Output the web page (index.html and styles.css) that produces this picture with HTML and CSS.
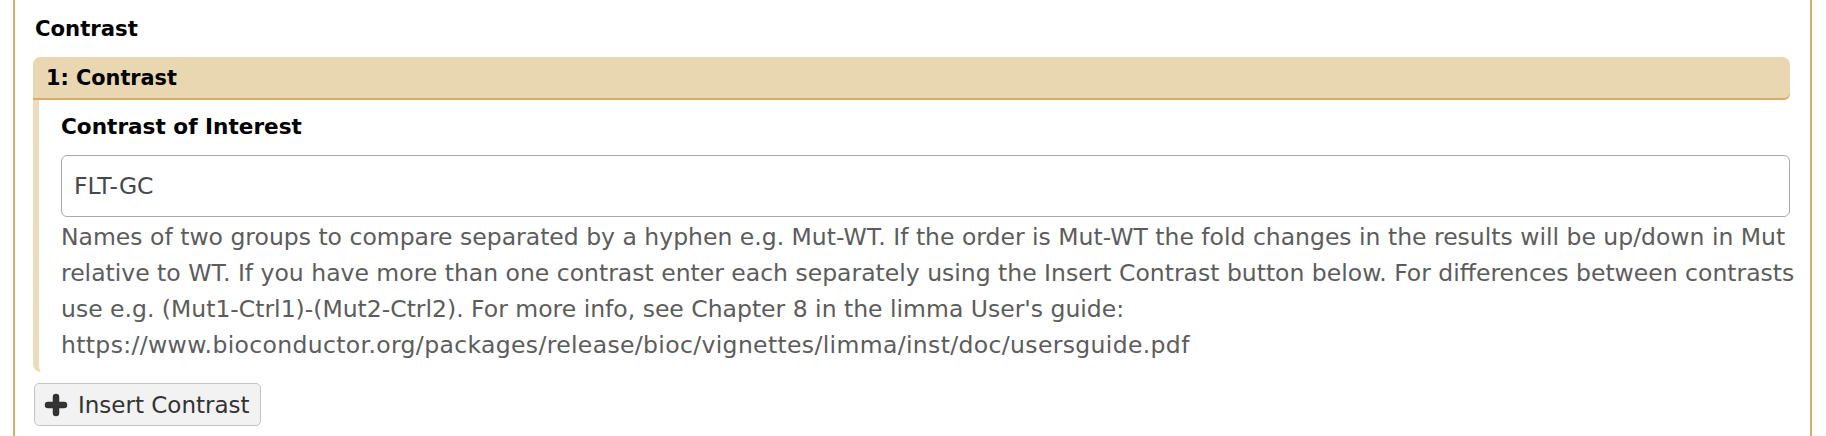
FILE: index.html
```html
<!DOCTYPE html>
<html>
<head>
<meta charset="utf-8">
<link rel="stylesheet" href="styles.css">
</head>
<body>
<div class="section">
  <div class="section-title">Contrast</div>
  <div class="repeat">
    <div class="repeat-header">1: Contrast</div>
    <div class="repeat-body">
      <div class="field-label">Contrast of Interest</div>
      <div class="field-input">FLT-GC</div>
      <div class="field-help">Names of two groups to compare separated by a hyphen e.g. Mut-WT. If the order is Mut-WT the fold changes in the results will be up/down in Mut<br>relative to WT. If you have more than one contrast enter each separately using the Insert Contrast button below. For differences between contrasts<br>use e.g. (Mut1-Ctrl1)-(Mut2-Ctrl2). For more info, see Chapter 8 in the limma User's guide:<br><span class="help-url">https://www.bioconductor.org/packages/release/bioc/vignettes/limma/inst/doc/usersguide.pdf</span></div>
    </div>
  </div>
  <button class="insert-btn"><svg class="plus" viewBox="0 0 24 24" width="24" height="24"><path d="M12 4v16M4 12h16" stroke="#333" stroke-width="6.5" stroke-linecap="round"/></svg><span>Insert Contrast</span></button>
</div>
</body>
</html>
```
FILE: styles.css
```css
html, body {
  margin: 0;
  padding: 0;
  background: #fff;
}
body {
  font-family: "DejaVu Sans", Verdana, sans-serif;
  color: #000;
}
.section {
  margin-left: 13px;
  width: 1799px;
  height: 436px;
  box-sizing: border-box;
  border-left: 2px solid #d4b06a;
  border-right: 2px solid #d4b06a;
  padding: 14.5px 20px 0 18px;
}
.section-title {
  font-weight: bold;
  font-size: 21.2px;
  line-height: 28px;
  margin-left: 2px;
}
.repeat {
  margin-top: 14.5px;
  width: 1757px;
  box-sizing: border-box;
  border-left: 6px solid #ecdcbb;
  border-radius: 8px 0 0 8px;
}
.repeat-header {
  margin-left: -6px;
  height: 41px;
  box-sizing: border-box;
  padding: 2px 0 0 13px;
  background: #e9d7b2;
  border-radius: 8px 8px 6px 0;
  box-shadow: 0 2px 0 #d3af68;
  font-weight: bold;
  font-size: 20.8px;
  line-height: 39px;
}
.repeat-body {
  padding: 15px 0 9px 22px;
}
.field-label {
  font-weight: bold;
  font-size: 21.6px;
  line-height: 28px;
}
.field-input {
  margin-top: 14px;
  width: 1729px;
  height: 62px;
  box-sizing: border-box;
  border: 1px solid #aaa;
  border-radius: 6px;
  padding-left: 12px;
  font-size: 23.5px;
  line-height: 60px;
  color: #45494d;
}
.field-help {
  margin-top: 2px;
  font-size: 23.5px;
  line-height: 36px;
  color: #5c5c5c;
  white-space: nowrap;
}
.help-url {
  letter-spacing: 0.35px;
}
.insert-btn {
  display: flex;
  align-items: center;
  gap: 10px;
  margin-top: 11px;
  margin-left: 1px;
  height: 43px;
  width: 227px;
  box-sizing: border-box;
  padding: 0 9px;
  border: 1px solid #c4c4c4;
  border-radius: 5px;
  background: #f2f2f2;
  font-family: "DejaVu Sans", Verdana, sans-serif;
  font-size: 23px;
  color: #333;
}
.plus {
  flex: none;
}
```
